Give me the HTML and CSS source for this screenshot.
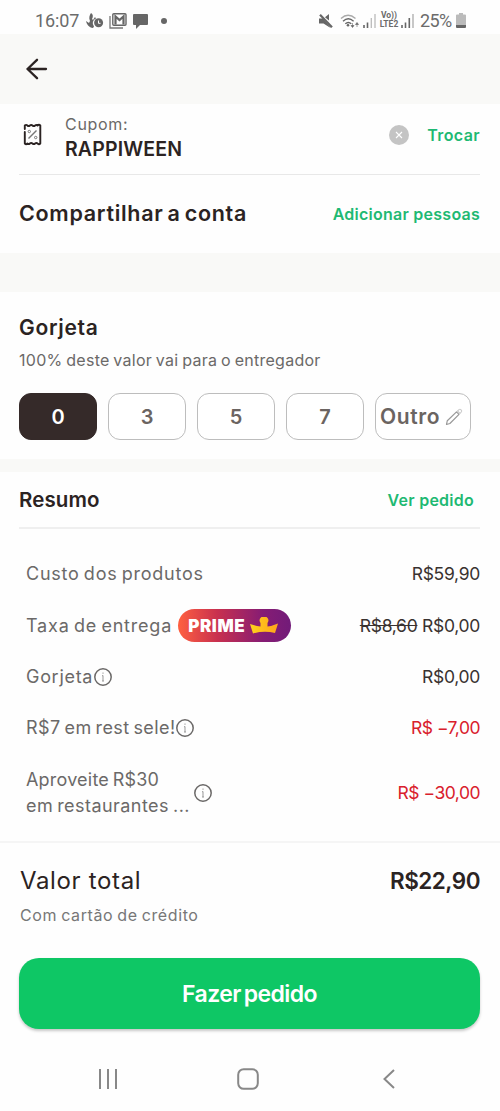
FILE: index.html
```html
<!DOCTYPE html>
<html lang="pt-BR">
<head>
<meta charset="utf-8">
<meta name="viewport" content="width=device-width, initial-scale=1">
<title>Fazer pedido</title>
<link rel="stylesheet" href="styles.css">
</head>
<body>
<div class="status">
  <div class="status-left">
    <span class="clock">16:07</span>
    <svg class="ic-flame" width="18" height="16" viewBox="0 0 18 16"><path d="M5 0c2 1 2.500 3.500 1 6l1 1 2-3 1 1.500a5 5 0 0 0-2 8L7 15C3 14.500 1 12 0 8l3 2 1-2C2.500 5 3.500 2 5 0z" fill="#666"/><circle cx="12.600" cy="9.800" r="4.500" fill="#666"/><path d="M12.500 7.500v2.800h2" fill="none" stroke="#fff"/></svg>
    <svg class="ic-mail" width="18" height="16" viewBox="0 0 18 16"><path d="M1 3v12h13" fill="none" stroke="#777" stroke-width="1.300"/><rect x="3.800" y=".8" width="13.200" height="11.500" rx="1" fill="none" stroke="#666" stroke-width="1.400"/><path d="M6.500 11.500V3.500l4 3.600 4-3.600v8" fill="none" stroke="#666" stroke-width="2.200"/></svg>
    <svg class="ic-chat" width="15" height="15" viewBox="0 0 15 15"><path d="M1 0h13q1 0 1 1v9q0 1-1 1H7l-4 4v-4H1q-1 0-1-1V1q0-1 1-1z" fill="#666"/></svg>
    <i class="dot"></i>
  </div>
  <div class="status-right">
    <svg class="ic-mute" width="14" height="15" viewBox="0 0 14 15"><path d="M0 4.500h4L12 14 10 13 4.500 9.500H0zM10 0v6.500L6 3.200z" fill="#666"/><path d="M1 .8l12 12.500" stroke="#666" stroke-width="2.200"/></svg>
    <svg class="ic-wifi" width="19" height="15" viewBox="0 0 19 15"><g fill="none" stroke-width="1.400"><path d="M1 4.500q7-6.500 14.500 0" stroke="#aaa"/><path d="M3 7.200q5.300-4.800 10.600 0M5.300 9.800q3-2.700 6 0" stroke="#666"/></g><circle cx="8" cy="11.300" r="1.300" fill="#666"/><path d="M12.500 9v3M11 11.500l1.500 2 1.500-2zM17 13v-3M15.500 10.500l1.500-2 1.500 2z" fill="#666" stroke="#666" stroke-width=".6"/></svg>
    <svg class="ic-sig" width="13" height="14" viewBox="0 0 13 14"><path d="M1 11v3M4.500 8.500V14" stroke="#666" stroke-width="1.600"/><path d="M8.300 4v10M12 0v14" stroke="#bbb" stroke-width="1.300"/></svg>
    <span class="lte"><span>Vo))</span><span>LTE2</span></span>
    <svg class="ic-sig2" width="13" height="14" viewBox="0 0 13 14"><path d="M1 11v3M4.500 8.500V14M8.300 4v10" stroke="#666" stroke-width="1.600"/><path d="M12 0v14" stroke="#aaa" stroke-width="1.300"/></svg>
    <span class="pct">25%</span>
    <svg class="ic-bat" width="10" height="15" viewBox="0 0 10 15"><path d="M3 0h4v1.500h2q1 0 1 1V12H0V2.500q0-1 1-1h2z" fill="#bbb"/><path d="M0 12h10v2q0 1-1 1H1q-1 0-1-1z" fill="#666"/></svg>
  </div>
</div>

<header class="topbar">
  <svg width="22" height="22" viewBox="0 0 22 22" fill="none" stroke="#2b2322" stroke-width="2.300" stroke-linecap="round" stroke-linejoin="round"><path d="M20 11H1.500M11 1.800L1.500 11l9.500 9.200"/></svg>
</header>

<section class="coupon">
  <svg class="ic-coupon" width="19" height="24" viewBox="0 0 19 24" fill="none"><path d="M1.800 6V2.500q1.300-1.300 2.600 0 1.200 1.200 2.500 0t2.600 0 2.600 0 2.500 0q1.400-1.300 2.700 0V20.500q-1.300 1.300-2.700 0-1.200-1.200-2.500 0t-2.600 0-2.600 0-2.500 0q-1.300 1.300-2.600 0V9" stroke="#2b2322" stroke-width="1.900" stroke-linejoin="round" stroke-linecap="round"/><path d="M5.500 15.500l8-8" stroke="#777" stroke-width="1.400"/><circle cx="6.300" cy="8.500" r="1.200" stroke="#777"/><circle cx="12.700" cy="14.500" r="1.200" stroke="#777"/></svg>
  <div class="coupon-text"><span class="coupon-label">Cupom:</span><strong class="coupon-code">RAPPIWEEN</strong></div>
  <svg class="ic-clear" width="20" height="20" viewBox="0 0 20 20"><circle cx="10" cy="10" r="10" fill="#c4c4c4"/><path d="M7 7l6 6M13 7l-6 6" stroke="#fff" stroke-width="1.100"/></svg>
  <a class="link trocar">Trocar</a>
</section>

<section class="share">
  <h2 class="t-share">Compartilhar a conta</h2>
  <a class="link add">Adicionar pessoas</a>
</section>
<div class="band"></div>

<section class="tip">
  <h2 class="t-tip">Gorjeta</h2>
  <p class="tip-sub">100% deste valor vai para o entregador</p>
  <div class="tip-options">
    <button class="opt on">0</button>
    <button class="opt">3</button>
    <button class="opt">5</button>
    <button class="opt">7</button>
    <button class="opt other"><span>Outro</span><svg width="18" height="18" viewBox="0 0 18 18" fill="none" stroke-linejoin="round"><path d="M1.500 16.500l.8-3.800 9.200-8.800 2.500 2.500-9.100 9.100z" stroke="#999" stroke-width="1.200"/><path d="M12.500 3l1.500-1.400q1-.8 2 .2l.3.300q.8 1 0 1.900L15 5.500z" stroke="#ccc" stroke-width="1.100"/></svg></button>
  </div>
</section>
<div class="band thin"></div>

<section class="summary">
  <div class="summary-head"><h2 class="t-sum">Resumo</h2><a class="link ver">Ver pedido</a></div>
  <div class="rows">
    <div class="row"><span class="lb l1">Custo dos produtos</span><span class="val">R$59,90</span></div>
    <div class="row"><span class="lb l2">Taxa de entrega</span>
      <span class="prime"><b>PRIME</b><svg width="28" height="17" viewBox="0 0 28 17"><defs><linearGradient id="gold" x1="0" x2="1"><stop offset="0" stop-color="#ffd21c"/><stop offset="1" stop-color="#ffa51c"/></linearGradient></defs><path d="M0 7l7 2 3.500.5V6a4.300 4.300 0 1 1 7 0v3.500L21 9l7-2.500L25 16q-11-2.500-22 .5z" fill="url(#gold)"/></svg></span>
      <span class="val"><s>R$8,60</s> R$0,00</span></div>
    <div class="row"><span class="lb l3">Gorjeta</span><svg class="info" width="18" height="18" viewBox="0 0 18 18"><circle cx="9" cy="9" r="8.200" fill="none" stroke="#6b6968" stroke-width="1.500"/><path d="M9 7.500v5.500M8 7.700h1M8 13h2M9 4.500v1.300" stroke="#999" stroke-width="1"/></svg><span class="val">R$0,00</span></div>
    <div class="row"><span class="lb l4">R$7 em rest sele!</span><svg class="info" width="18" height="18" viewBox="0 0 18 18"><circle cx="9" cy="9" r="8.200" fill="none" stroke="#6b6968" stroke-width="1.500"/><path d="M9 7.500v5.500M8 7.700h1M8 13h2M9 4.500v1.300" stroke="#999" stroke-width="1"/></svg><span class="val red">R$ −7,00</span></div>
    <div class="row tall"><span class="lb two"><span class="l5">Aproveite R$30</span><span class="l6">em restaurantes ...</span></span><svg class="info gap" width="18" height="18" viewBox="0 0 18 18"><circle cx="9" cy="9" r="8.200" fill="none" stroke="#6b6968" stroke-width="1.500"/><path d="M9 7.500v5.500M8 7.700h1M8 13h2M9 4.500v1.300" stroke="#999" stroke-width="1"/></svg><span class="val red">R$ −30,00</span></div>
  </div>
</section>

<section class="total">
  <div class="total-line"><span class="t-total">Valor total</span><strong class="t-price">R$22,90</strong></div>
  <p class="pay">Com cartão de crédito</p>
  <button class="order"><span>Fazer pedido</span></button>
</section>

<nav class="sysnav">
  <svg width="20" height="20" viewBox="0 0 20 20" stroke="#888" stroke-width="2"><path d="M2 0v20M10 0v20M18 0v20"/></svg>
  <svg width="22" height="22" viewBox="0 0 22 22"><rect x="1.200" y="1.200" width="19.600" height="19.600" rx="5.500" fill="none" stroke="#888" stroke-width="2"/></svg>
  <svg width="12" height="20" viewBox="0 0 12 20"><path d="M11 1L1.500 10 11 19" fill="none" stroke="#888" stroke-width="2"/></svg>
</nav>
</body>
</html>
```
FILE: styles.css
```css
* { box-sizing: border-box; }
body { margin: 0; width: 500px; height: 1111px; overflow: hidden; background: #fefefe; font-family: Inter, "Liberation Sans", sans-serif; color: #2b2322; }
h2, p { margin: 0; }
h2 { font-weight: 600; font-size: 21px; line-height: 28px; }
svg { display: block; flex: none; }
span, a, strong, h2, p { white-space: nowrap; }
button { font-family: inherit; padding: 0; margin: 0; border: 0; }

.status { height: 34px; padding: 0 34px 0 35px; display: flex; justify-content: space-between; font-family: Roboto, sans-serif; color: #6b6b6b; }
.status-left, .status-right { display: flex; align-items: center; padding-top: 8px; }
.clock { font-size: 18px; line-height: 24px; width: 51px; letter-spacing: -.1px; }
.ic-mail { margin-left: 5px; }
.ic-chat { margin-left: 6px; }
.dot { width: 6px; height: 6px; border-radius: 50%; background: #666; margin-left: 13px; }
.ic-wifi { margin-left: 7px; }
.ic-sig { margin-left: 4px; }
.lte { display: flex; flex-direction: column; align-items: center; width: 20px; margin: -2px 0 0 3px; font-size: 8.500px; line-height: 9px; font-weight: 700; }
.ic-sig2 { margin-left: 2px; }
.pct { font-size: 18px; line-height: 24px; width: 34px; margin-left: 6px; letter-spacing: -.6px; }
.ic-bat { margin-left: 2px; margin-top: -2px; }

.topbar { height: 70px; background: #f9f9f7; padding-left: 26px; display: flex; align-items: center; }

.coupon { height: 71px; margin: 0 20px 0 19px; border-bottom: 1px solid #e8e8e8; padding: 4px 0 0 4px; display: flex; align-items: center; }
.ic-coupon { margin-top: -12px; }
.coupon-text { display: flex; flex-direction: column; margin-left: 23px; flex: 1; padding-bottom: 6px; }
.coupon-label { font-size: 16px; line-height: 22px; color: #6b6968; letter-spacing: .7px; }
.coupon-code { font-size: 19.500px; line-height: 28px; font-weight: 600; letter-spacing: .15px; }
.ic-clear { margin: -12px 18px 0 0; }
.link { color: #1eb973; font-weight: 600; font-size: 16px; line-height: 22px; letter-spacing: .25px; }
.trocar { margin-top: -12px; letter-spacing: .4px; }

.share { height: 78px; padding: 0 20px 2px 19px; display: flex; align-items: center; justify-content: space-between; }
.t-share { font-size: 21.500px; letter-spacing: .7px; word-spacing: -2px; }
.add { margin-top: 2px; }
.band { height: 39px; background: #f9f9f7; }
.thin { height: 13px; }

.tip { height: 167px; padding: 22px 0 0 19px; }
.t-tip { letter-spacing: .7px; }
.tip-sub { font-size: 16px; line-height: 22px; margin-top: 7px; color: #6b6968; letter-spacing: .27px; word-spacing: -1px; }
.tip-options { display: flex; gap: 11px; margin-top: 22px; }
.opt { width: 78px; height: 47px; border: 1.500px solid #bdbdbd; border-radius: 12px; background: #fff; font-size: 20px; font-weight: 600; color: #6b6461; }
.on { background: #352a29; border-color: #352a29; color: #fff; }
.other { width: 96px; display: flex; align-items: center; gap: 5px; padding-left: 4px; font-size: 21px; letter-spacing: .6px; }

.summary { height: 371px; border-bottom: 2px solid #f5f5f5; }
.summary-head { height: 57px; margin: 0 20px 0 19px; padding-right: 6px; border-bottom: 2px solid #efefef; display: flex; align-items: center; justify-content: space-between; }
.t-sum { font-size: 20.500px; letter-spacing: .1px; }
.ver { margin-top: 1px; }
.rows { padding: 19.500px 20px 0 26px; }
.row { height: 51.400px; display: flex; align-items: center; font-size: 17.500px; line-height: 26px; }
.tall { height: 77px; }
.lb { color: #6b6968; font-size: 18px; word-spacing: -1.500px; }
.l1 { letter-spacing: .75px; }
.l2 { letter-spacing: .8px; }
.l3 { letter-spacing: .7px; }
.l4 { letter-spacing: .4px; }
.l5 { letter-spacing: .2px; }
.l6 { letter-spacing: .45px; }
.two { display: flex; flex-direction: column; }
.info { margin-left: 1px; }
.gap { margin-left: 4px; }
.val { margin-left: auto; color: #393230; letter-spacing: -.3px; }
.red { color: #d9202c; letter-spacing: -.5px; }
.prime { width: 113px; height: 33px; margin-left: 6px; border-radius: 17px; background: linear-gradient(90deg, #ff6040, #c8304f 35%, #861c74 75%, #721b79); display: flex; align-items: center; gap: 5px; padding-left: 10px; color: #fff; }
.prime b { font-size: 17px; font-weight: 900; letter-spacing: .6px; }

.total { height: 203px; padding: 22px 20px 0 20px; }
.total-line { display: flex; justify-content: space-between; font-size: 24px; line-height: 32px; }
.t-total { letter-spacing: .65px; }
.t-price { font-weight: 600; font-size: 22.500px; letter-spacing: -.5px; }
.pay { font-size: 16px; line-height: 22px; margin-top: 7px; color: #777; letter-spacing: .6px; word-spacing: -1px; }
.order { display: flex; align-items: center; justify-content: center; width: 461px; height: 71px; margin: 32px 0 0 -1px; border-radius: 20px; background: #0ec765; box-shadow: 0 2px 3px rgba(0,0,0,.22); color: #fff; font-size: 23px; font-weight: 600; letter-spacing: -.6px; word-spacing: -2px; }

.sysnav { height: 66px; padding-left: 98px; display: flex; align-items: center; }
.sysnav svg + svg { margin-left: 119px; }
.sysnav svg:last-child { margin-left: 124px; }
```
